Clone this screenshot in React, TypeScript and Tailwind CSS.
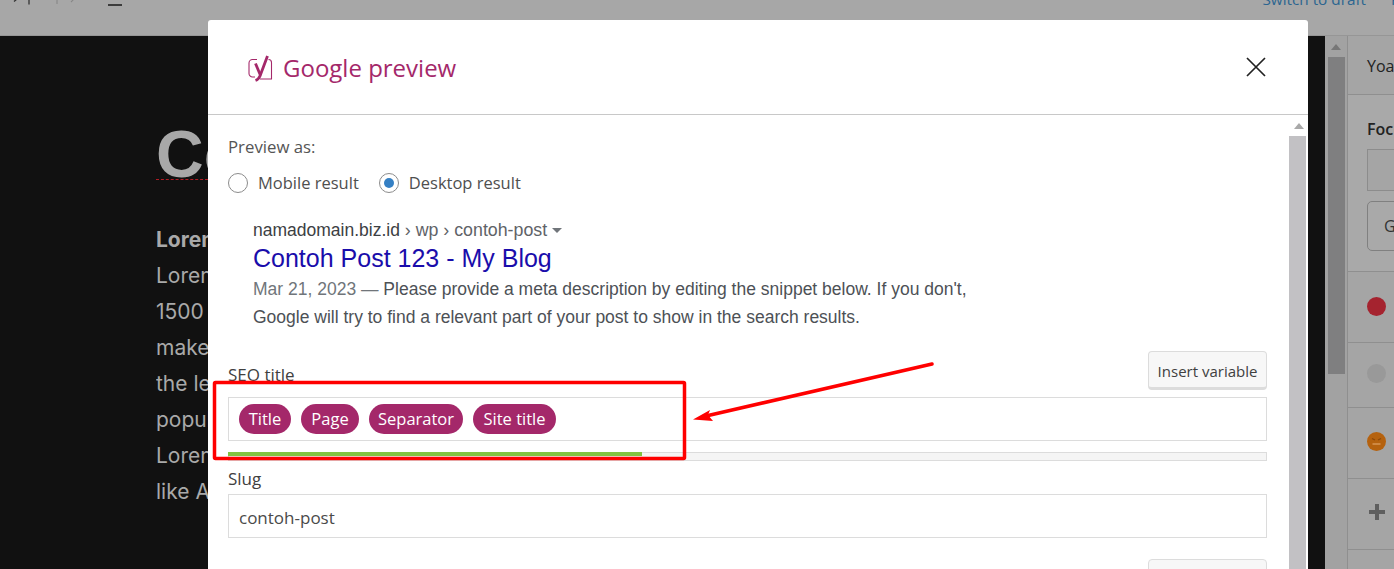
const lines = ["Lorem Ipsum", "1500 years", "make a type", "the leap into", "popular in", "Lorem Ipsum", "like Aldus"];

function YoastLogo() {
  return (
    <svg width="25" height="27" viewBox="0 0 25 27" fill="none" className="shrink-0">
      <path d="M9 4.500H4.500a3.500 3.500 0 0 0-3.500 3.500v10.500a3.500 3.500 0 0 0 3.500 3.500H7M20.500 4.500a3 3 0 0 1 3 3V24H12" stroke="#a4286a" strokeWidth="1.100" />
      <path d="M7.500 8.500L12.500 20.500" stroke="#a4286a" strokeWidth="2.800" />
      <path d="M19.500 1L12 21C11 23.500 9.500 24.800 7.500 25.500" stroke="#a4286a" strokeWidth="2.800" />
    </svg>
  );
}

function Chip({ label, width }: { label: string; width: string }) {
  return (
    <span className={`flex h-[30px] items-center justify-center rounded-[15px] bg-[#a4286a] pt-[1px] text-[16.5px] text-white ${width}`}>
      {label}
    </span>
  );
}

function Radio({ checked, label }: { checked?: boolean; label: string }) {
  return (
    <div className="flex items-center gap-[10px]">
      <span className="flex h-[20px] w-[20px] items-center justify-center rounded-full border border-[#8c8c8c] bg-white">
        {checked && <span className="h-[10px] w-[10px] rounded-full bg-[#3580c4]" />}
      </span>
      <span className="text-[16.5px] text-[#4f4f4f]">{label}</span>
    </div>
  );
}

function SidebarRow({ children, className }: { children: React.ReactNode; className: string }) {
  return <div className={`flex items-center border-b border-[#8f8f8f] pl-[19px] ${className}`}>{children}</div>;
}

export default function App() {
  return (
    <div className="relative flex h-[569px] w-[1394px] flex-col overflow-hidden bg-[#111111] font-['Open_Sans',sans-serif]">
      <header className="flex h-[36px] shrink-0 items-start justify-between border-b border-[#969696] bg-[#a7a7a7]">
        <div className="flex items-start pl-[12px]">
          <svg width="110" height="8" viewBox="0 0 110 8" fill="none">
            <path d="M5 -1L2 1.500M17 -1V4.500" stroke="#333" strokeWidth="1.300" />
            <path d="M45 -1V4M59 2L62 -1" stroke="#888" strokeWidth="1.100" />
            <path d="M96 5H110" stroke="#222" strokeWidth="1.600" />
          </svg>
        </div>
        <div className="mt-[-12px] flex gap-[25px] text-[15.3px] whitespace-nowrap text-[#2b6590]">
          <span>Switch to draft</span>
          <span className="w-[3px] overflow-hidden">P</span>
        </div>
      </header>
      <div className="flex min-h-0 flex-1">
        <main className="w-[1325px] overflow-hidden bg-[#111111] pt-[93px] pl-[156px] whitespace-nowrap text-[#a9a9a9]">
          <h1 className="h-[51px] w-fit border-b border-dashed border-[#b01c24] font-['Liberation_Sans',sans-serif] text-[66px] leading-[50px] font-bold text-[#a8a8a8]">
            <span className="block w-[52px] overflow-hidden">Contoh</span>
          </h1>
          <div className="mt-[42px] w-[52px] overflow-hidden font-['Inter',sans-serif] text-[21px] leading-[36px]">
            <p className="font-bold">Lorem</p>
            {lines.map((l) => (
              <p key={l + l.length}>{l}</p>
            ))}
          </div>
        </main>
        <div className="relative w-[22px] shrink-0 bg-[#a2a2a2]">
          <div className="mx-auto mt-[21px] h-[317px] w-[17px] bg-[#7f7f80]" />
          <svg className="absolute top-[8px] left-[6px]" width="10" height="6" viewBox="0 0 10 6">
            <path d="M5 0l5 6H0z" fill="#777" />
          </svg>
        </div>
        <aside className="min-w-0 flex-1 overflow-hidden border-l border-[#8f8f8f] bg-[#a5a5a5] whitespace-nowrap text-[#222]">
          <SidebarRow className="h-[59px] pt-[2px]">
            <span className="text-[16px] font-medium">Yoast SEO</span>
          </SidebarRow>
          <div className="h-[177px] border-b border-[#8f8f8f] bg-[#a9a9a9] pt-[22px] pl-[19px]">
            <div className="text-[16px] leading-[24px] font-semibold">Focus keyphrase</div>
            <div className="mt-[8px] h-[42px] w-[200px] border border-[#8c8c8c] bg-[#a5a5a5]" />
            <div className="mt-[10px] flex h-[50px] w-[200px] items-center rounded-[5px] border border-[#808080] pl-[16px] text-[16px] text-[#333]">
              Get related
            </div>
          </div>
          <SidebarRow className="h-[71px] pb-[2px]">
            <span className="h-[19px] w-[19px] rounded-full bg-[#a5232f]" />
          </SidebarRow>
          <SidebarRow className="h-[65px] pb-[4px]">
            <span className="h-[19px] w-[19px] rounded-full bg-[#999999]" />
          </SidebarRow>
          <SidebarRow className="h-[71px] pb-[4px]">
            <svg width="19" height="19" viewBox="0 0 19 19">
              <circle cx="9.500" cy="9.500" r="9.500" fill="#b5620f" />
              <path d="M5 6.500l3 1.500M14 6.500l-3 1.500" stroke="#8a4708" strokeWidth="1.200" />
              <path d="M5.500 12h8" stroke="#d99a5a" strokeWidth="1.400" />
            </svg>
          </SidebarRow>
          <SidebarRow className="h-[71px] pb-[5px]">
            <svg width="18" height="18" viewBox="0 0 18 18" className="ml-[1px]">
              <path d="M7 1h4v6h6v4h-6v6H7v-6H1V7h6z" fill="#5f5f5f" />
            </svg>
          </SidebarRow>
        </aside>
      </div>

      <section className="absolute top-[20px] left-[208px] flex h-[549px] w-[1100px] flex-col overflow-hidden rounded-t-[3px] bg-white text-[#404040]">
        <div className="flex h-[95px] shrink-0 items-center justify-between border-b border-[#c8c8c8] pr-[42px] pl-[40px]">
          <div className="mt-[2px] flex items-center gap-[10px]">
            <YoastLogo />
            <span className="text-[24px] text-[#a4286a]">Google preview</span>
          </div>
          <svg width="20" height="20" viewBox="0 0 20 20" fill="none">
            <path d="M1 1l18 18M19 1L1 19" stroke="#222" strokeWidth="1.700" />
          </svg>
        </div>
        <div className="flex min-h-0 flex-1">
          <div className="min-w-0 flex-1 pt-[20px] pl-[20px]">
            <div className="w-[1039px]">
              <div className="text-[16.8px] leading-[24px] font-medium text-[#555]">Preview as:</div>
              <div className="mt-[12px] flex gap-[20px]">
                <Radio label="Mobile result" />
                <Radio checked label="Desktop result" />
              </div>
              <div className="mt-[22px] pl-[25px] font-['Liberation_Sans',sans-serif]">
                <div className="flex items-center text-[17.5px] leading-[24px] text-[#5f6368]">
                  <span className="text-[#3c4043]">namadomain.biz.id</span>
                  <span className="text-[17.8px]">&nbsp;› wp › contoh-post</span>
                  <span className="mt-[2px] ml-[5px] h-0 w-0 border-x-[5.500px] border-t-[5.500px] border-x-transparent border-t-[#70757a]" />
                </div>
                <div className="text-[25px] leading-[32px] text-[#1a0dab]">Contoh Post 123 - My Blog</div>
                <div className="mt-[1px] text-[17.5px] leading-[28px] text-[#4d5156]">
                  <span className="text-[#70757a]">Mar 21, 2023 — </span>
                  Please provide a meta description by editing the snippet below. If you don't,
                  <br />
                  Google will try to find a relevant part of your post to show in the search results.
                </div>
              </div>
              <div className="mt-[20px] flex items-end justify-between">
                <span className="mb-[3px] text-[17px] leading-[24px]">SEO title</span>
                <span className="flex h-[39px] w-[119px] items-center justify-center rounded-[4px] border border-b-[3px] border-[#dcdcdc] bg-[#f7f7f7] pt-[3px] text-[15px]">
                  Insert variable
                </span>
              </div>
              <div className="mt-[7px] flex h-[44px] items-center gap-[10px] border border-[#dcdcdc] pl-[10px]">
                <Chip label="Title" width="w-[52px]" />
                <Chip label="Page" width="w-[58px]" />
                <Chip label="Separator" width="w-[94px]" />
                <Chip label="Site title" width="w-[83px]" />
              </div>
              <div className="mt-[11px] h-[9px] border border-[#dcdcdc] bg-[#f5f5f5]">
                <div className="mt-[-1px] ml-[-1px] h-[4px] w-[414px] bg-[#82c341]" />
              </div>
              <div className="mt-[6px] text-[17px] leading-[24px]">Slug</div>
              <div className="mt-[3px] flex h-[44px] items-center border border-[#dcdcdc] pt-[4px] pl-[10px] text-[17px] text-[#4a4a4a]">
                contoh-post
              </div>
              <div className="mt-[21px] ml-auto h-[39px] w-[119px] rounded-[4px] border border-[#dcdcdc] bg-[#f7f7f7]" />
            </div>
          </div>
          <div className="relative w-[20px] shrink-0 pr-[2px]">
            <svg className="absolute top-[8px] left-[6px]" width="10" height="6" viewBox="0 0 10 6">
              <path d="M5 0l5 6H0z" fill="#a9a9a9" />
            </svg>
            <div className="mt-[21px] ml-[1px] h-[500px] w-[17px] bg-[#c2c1c4]" />
          </div>
        </div>
      </section>

      <svg className="pointer-events-none absolute inset-0" width="1394" height="569" viewBox="0 0 1394 569" fill="none">
        <rect x="214.500" y="382.500" width="470" height="76" rx="1" stroke="#ff0000" strokeWidth="3.500" />
        <path d="M932 364L706 416" stroke="#ff0000" strokeWidth="3.500" strokeLinecap="round" />
        <path d="M693 419.500L710 410l-2 5 5 6z" fill="#ff0000" />
      </svg>
    </div>
  );
}
